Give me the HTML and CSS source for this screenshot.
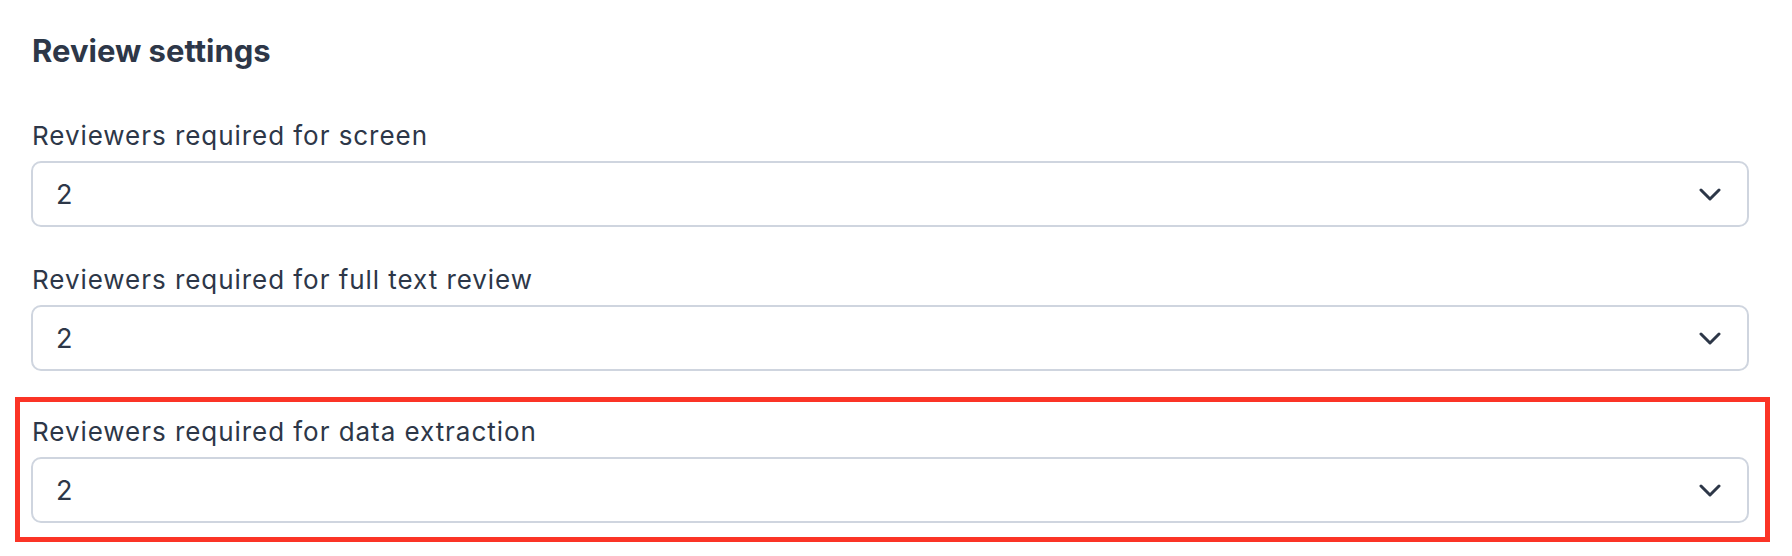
FILE: index.html
```html
<!DOCTYPE html>
<html lang="en">
<head>
  <meta charset="UTF-8">
  <meta name="viewport" content="width=device-width, initial-scale=1.0">
  <title>Review settings</title>
  <link rel="stylesheet" href="styles.css">
</head>
<body>
  <div class="container">
    <h2>Review settings</h2>

    <div class="field">
      <label>Reviewers required for screen</label>
      <div class="select">
        <span class="select-value">2</span>
        <svg class="chevron" width="22" height="13" viewBox="0 0 22 13"><polyline points="2,2 11,11 20,2"/></svg>
      </div>
    </div>

    <div class="field">
      <label>Reviewers required for full text review</label>
      <div class="select">
        <span class="select-value">2</span>
        <svg class="chevron" width="22" height="13" viewBox="0 0 22 13"><polyline points="2,2 11,11 20,2"/></svg>
      </div>
    </div>

    <div class="highlight">
      <label>Reviewers required for data extraction</label>
      <div class="select">
        <span class="select-value">2</span>
        <svg class="chevron" width="22" height="13" viewBox="0 0 22 13"><polyline points="2,2 11,11 20,2"/></svg>
      </div>
    </div>
  </div>
</body>
</html>
```

FILE: styles.css
```css
* { margin: 0; padding: 0; box-sizing: border-box; }
body { font-family: Inter, "Noto Sans", sans-serif; background: #fff; color: #2d3748; }
.container { padding: 32px 43px 0 31px; }

h2 { font-size: 31px; line-height: 38px; font-weight: 700; padding-left: 1px; margin-bottom: 48px; }

label { display: block; font-size: 26px; line-height: 36px; letter-spacing: 0.95px; margin-bottom: 7px; padding-left: 1px; }

.field + .field { margin-top: 35px; }

.select {
  display: flex; align-items: center; justify-content: space-between;
  height: 66px; border: 2px solid #cfd5df; border-radius: 10px;
  padding: 2px 26px 0 23px; background: #fff;
}
.select-value { font-size: 27px; line-height: 36px; }
.chevron { display: block; margin-top: -2px; }
.chevron polyline { fill: none; stroke: #2d3748; stroke-width: 3; stroke-linecap: round; stroke-linejoin: round; }

.highlight {
  margin: 26px -21px 0 -16px;
  padding: 12px 16px 14px 11px;
  border: 5px solid #fb3426;
}
```
